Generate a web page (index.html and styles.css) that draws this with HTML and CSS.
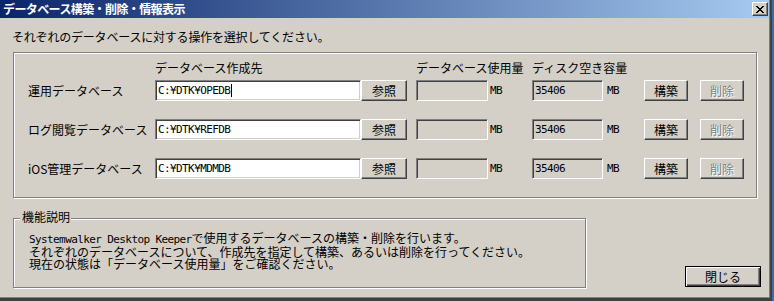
FILE: index.html
```html
<!DOCTYPE html>
<html>
<head>
<meta http-equiv="Content-Type" content="text/html; charset=utf-8"/>
<title>データベース構築・削除・情報表示</title>
<link rel="stylesheet" href="styles.css">
</head>
<body>
<div class="window">
  <div class="titlebar">
    <span class="title">データベース構築・削除・情報表示</span>
    <span class="caption-btn">
      <svg width="8" height="7" viewBox="0 0 8 7" shape-rendering="crispEdges"><path d="M0 0h2v1H0zM6 0h2v1H6zM1 1h2v1H1zM5 1h2v1H5zM2 2h4v1H2zM3 3h2v1H3zM2 4h4v1H2zM1 5h2v1H1zM5 5h2v1H5zM0 6h2v1H0zM6 6h2v1H6z" fill="#000"/></svg>
    </span>
  </div>

  <div class="content">
    <p class="prompt">それぞれのデータベースに対する操作を選択してください。</p>

    <div class="group db-group">
      <div class="db-grid db-head">
        <span class="head-path">データベース作成先</span>
        <span class="head-usage">データベース使用量</span>
        <span class="head-free">ディスク空き容量</span>
      </div>
      <div class="db-grid db-rows">
        <!-- 運用 -->
        <span class="row-label">運用データベース</span>
        <div class="field edit"><span class="mono">C:¥DTK¥OPEDB</span><span class="caret"></span></div>
        <button class="btn btn-ref">参照</button>
        <div class="field usage"></div>
        <span class="unit mono">MB</span>
        <div class="field free"><span class="mono">35406</span></div>
        <span class="unit unit-free mono">MB</span>
        <button class="btn">構築</button>
        <button class="btn" disabled>削除</button>

        <!-- ログ閲覧 -->
        <span class="row-label">ログ閲覧データベース</span>
        <div class="field edit"><span class="mono">C:¥DTK¥REFDB</span></div>
        <button class="btn btn-ref">参照</button>
        <div class="field usage"></div>
        <span class="unit mono">MB</span>
        <div class="field free"><span class="mono">35406</span></div>
        <span class="unit unit-free mono">MB</span>
        <button class="btn">構築</button>
        <button class="btn" disabled>削除</button>

        <!-- iOS管理 -->
        <span class="row-label">iOS管理データベース</span>
        <div class="field edit"><span class="mono">C:¥DTK¥MDMDB</span></div>
        <button class="btn btn-ref">参照</button>
        <div class="field usage"></div>
        <span class="unit mono">MB</span>
        <div class="field free"><span class="mono">35406</span></div>
        <span class="unit unit-free mono">MB</span>
        <button class="btn">構築</button>
        <button class="btn" disabled>削除</button>
      </div>
    </div>

    <div class="footer">
      <div class="group about">
        <span class="legend">機能説明</span>
        <div class="about-line"><span class="mono">Systemwalker Desktop Keeper</span>で使用するデータベースの構築・削除を行います。</div>
        <div class="about-line">それぞれのデータベースについて、作成先を指定して構築、あるいは削除を行ってください。</div>
        <div class="about-line">現在の状態は「データベース使用量」をご確認ください。</div>
      </div>
      <button class="btn btn-close">閉じる</button>
    </div>
  </div>
</div>
</body>
</html>
```

FILE: styles.css
```css
body {
  margin: 0;
  background-color: #3a6ea5;
  font-family: "Noto Sans CJK JP", sans-serif;
  font-size: 12px;
  color: #000;
}

.window {
  width: 772px;
  height: 301px;
  box-sizing: border-box;
  padding-right: 1px;
  background-color: #d4d0c8;
  border-right: 2px solid #404040;
  border-bottom: 3px solid #404040;
  box-shadow: inset -1px -1px 0 #808080;
}

/* caption */
.titlebar {
  height: 18px;
  display: flex;
  align-items: center;
  justify-content: space-between;
  padding: 0 1px 0 3px;
  background: linear-gradient(to right, #0a246a, #a6caf0);
}

.title {
  color: #fff;
  font-weight: bold;
  line-height: 16px;
  letter-spacing: -0.6px;
}

.caption-btn {
  width: 16px;
  height: 14px;
  box-sizing: border-box;
  display: flex;
  align-items: center;
  justify-content: center;
  background-color: #d4d0c8;
  border: 1px solid;
  border-color: #fff #404040 #404040 #fff;
  box-shadow: inset -1px -1px 0 #808080;
}

/* body */
.content {
  padding: 11px 0 0 13px;
}

.prompt {
  margin: 0 0 7px -1px;
  line-height: 16px;
  letter-spacing: -0.2px;
}

.mono {
  font-family: "DejaVu Sans Mono", monospace;
  font-size: 11px;
  letter-spacing: -0.6px;
}

.group {
  position: relative;
  box-sizing: border-box;
  border: 1px solid #808080;
  box-shadow: inset 1px 1px 0 #fff, 1px 1px 0 #fff;
}

.db-group {
  width: 744px;
  padding: 7px 0 18px 14px;
}

.db-grid {
  display: grid;
  grid-template-columns: 127px 206px 46px 81px 44px 71px 41px 44px 56px;
  align-items: center;
  white-space: nowrap;
}

.db-head {
  line-height: 16px;
  margin-bottom: 4px;
}

.head-path { grid-column: 2; }
.head-usage { grid-column: 4 / span 2; padding-left: 9px; }
.head-free { grid-column: 6 / span 3; }

.db-rows {
  grid-auto-rows: 21px;
  row-gap: 18px;
}

.row-label {
  line-height: 16px;
}

/* sunken edit / static boxes */
.field {
  height: 21px;
  box-sizing: border-box;
  display: flex;
  align-items: center;
  padding-left: 2px;
  background-color: #d4d0c8;
  border: 1px solid;
  border-color: #808080 #fff #fff #808080;
  box-shadow: inset 1px 1px 0 #404040, inset -1px -1px 0 #d4d0c8;
}

.field.edit {
  background-color: #fff;
}

.usage {
  width: 72px;
  justify-self: end;
}

.free {
  width: 71px;
}

.caret {
  width: 1px;
  height: 13px;
  margin-left: 1px;
  background-color: #000;
}

.unit { padding-left: 2px; }
.unit-free { padding-left: 4px; }

/* push buttons */
.btn {
  width: 44px;
  height: 21px;
  padding: 0;
  font-family: "Noto Sans CJK JP", sans-serif;
  font-size: 12px;
  line-height: 17px;
  color: #000;
  background-color: #d4d0c8;
  border: 1px solid;
  border-color: #fff #404040 #404040 #fff;
  box-shadow: inset -1px -1px 0 #808080;
}

.btn-ref {
  width: 46px;
}

.btn:disabled {
  justify-self: end;
  color: #808080;
  text-shadow: 1px 1px 0 #fff;
}

/* bottom part */
.footer {
  width: 748px;
  margin-top: 20px;
  display: flex;
  justify-content: space-between;
  align-items: flex-end;
}

.about {
  width: 573px;
  height: 70px;
  padding: 13px 0 0 15px;
  line-height: 12px;
  white-space: nowrap;
}

.legend {
  position: absolute;
  left: 6px;
  top: -10px;
  padding: 0 1px 0 2px;
  line-height: 16px;
  background-color: #d4d0c8;
}

.btn-close {
  width: 76px;
  margin-bottom: 1px;
  border: 1px solid #000;
  box-shadow: inset 1px 1px 0 #fff, inset -1px -1px 0 #404040, inset -2px -2px 0 #808080;
}
```
